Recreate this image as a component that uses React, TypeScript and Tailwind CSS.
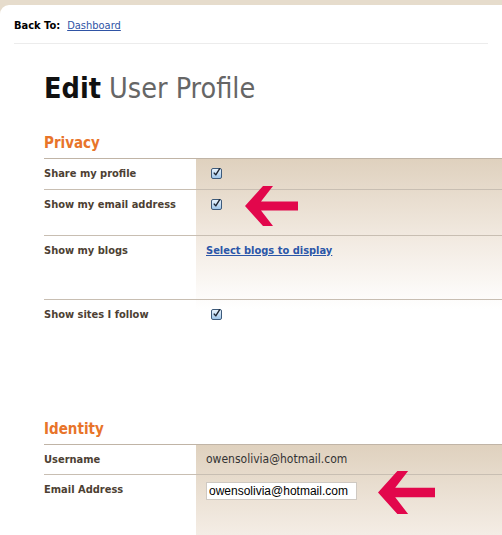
import React from "react";

const font = { fontFamily: '"DejaVu Sans Condensed", "DejaVu Sans", Verdana, sans-serif' };

function Check() {
  return (
    <span className="ml-[5px] mt-[1px] inline-flex h-[11px] w-[11px] items-center justify-center rounded-[2px] border border-[#3d5a7a] bg-[linear-gradient(#eaf4fd,#9fc6ea)]">
      <svg width="11" height="11" viewBox="0 0 11 11" className="-mt-[2px]">
        <path d="M2.2 5.6 L4.6 8.4 L9.6 0.6" fill="none" stroke="#1c2430" strokeWidth="1.7" strokeLinejoin="round" />
      </svg>
    </span>
  );
}

function Arrow({ w, h }: { w: number; h: number }) {
  return (
    <svg width={w} height={h} viewBox="0 0 53 40" preserveAspectRatio="none">
      <polygon points="0,20 18,0 28,0 16,15.5 53,15.5 53,24.5 16,24.5 28,40 18,40" fill="#e2074c" />
    </svg>
  );
}

function Row({ label, h, children, first }: { label: string; h: number; children?: React.ReactNode; first?: boolean }) {
  return (
    <div className={`grid grid-cols-[152px_1fr] ${first ? "" : "border-t border-[#c8beb2]"}`} style={{ height: h }}>
      <div className="pt-[8px] text-[11px] font-bold leading-[13px] text-[#4d3f33]">{label}</div>
      <div className="relative flex items-start pl-[10px] pt-[8px]">{children}</div>
    </div>
  );
}

export default function App() {
  return (
    <div className="min-h-[535px] w-[502px] overflow-hidden bg-[#e6dccc] pt-[5px]" style={font}>
      <div className="min-h-[530px] rounded-tl-[9px] bg-white">
        <div className="mx-[14px] flex items-center gap-[7px] border-b border-[#ececec] pb-[11px] pt-[14px] text-[11px] leading-[13px]">
          <span className="font-bold text-black">Back To:</span>
          <a className="text-[#2f54a5] underline">Dashboard</a>
        </div>
        <div className="px-[44px] pt-[28px]">
          <h1 className="text-[28.5px] leading-[34px] text-[#666666]">
            <span className="font-bold text-[#111111]">Edit</span> User Profile
          </h1>

          <h2 className="mt-[27px] pb-[5px] text-[15px] font-bold leading-[20px] text-[#e8742a]">Privacy</h2>
          <div className="-mr-[44px] border-t border-[#c0b4a6] [background:linear-gradient(#dfd1be,#f2eae1_80px,#ffffff_150px)_152px_0/calc(100%_-_152px)_100%_no-repeat]">
            <Row label="Share my profile" h={30} first>
              <Check />
            </Row>
            <Row label="Show my email address" h={46}>
              <Check />
              <div className="absolute left-[49px] top-[-4px]">
                <Arrow w={53} h={40} />
              </div>
            </Row>
            <Row label="Show my blogs" h={64}>
              <a className="text-[11px] font-bold leading-[13px] text-[#2b56a8] underline">Select blogs to display</a>
            </Row>
            <Row label="Show sites I follow" h={60}>
              <Check />
            </Row>
          </div>

          <h2 className="mt-[60px] pb-[5px] text-[15px] font-bold leading-[20px] text-[#e8742a]">Identity</h2>
          <div className="-mr-[44px] border-t border-[#c0b4a6] [background:linear-gradient(#dfd1be,#f2eae1_80px,#ffffff_150px)_152px_0/calc(100%_-_152px)_100%_no-repeat]">
            <Row label="Username" h={29} first>
              <span className="text-[12px] leading-[13px] text-[#333333]">owensolivia@hotmail.com</span>
            </Row>
            <Row label="Email Address" h={61}>
              <input
                readOnly
                value="owensolivia@hotmail.com"
                className="-mt-[1px] h-[18px] w-[151px] border border-[#cfc9c2] bg-white px-[2px] text-[12px] text-black outline-none"
                style={{ fontFamily: '"Liberation Sans", Arial, sans-serif' }}
              />
              <div className="absolute left-[182px] top-[-4px]">
                <Arrow w={57} h={43} />
              </div>
            </Row>
          </div>
        </div>
      </div>
    </div>
  );
}
